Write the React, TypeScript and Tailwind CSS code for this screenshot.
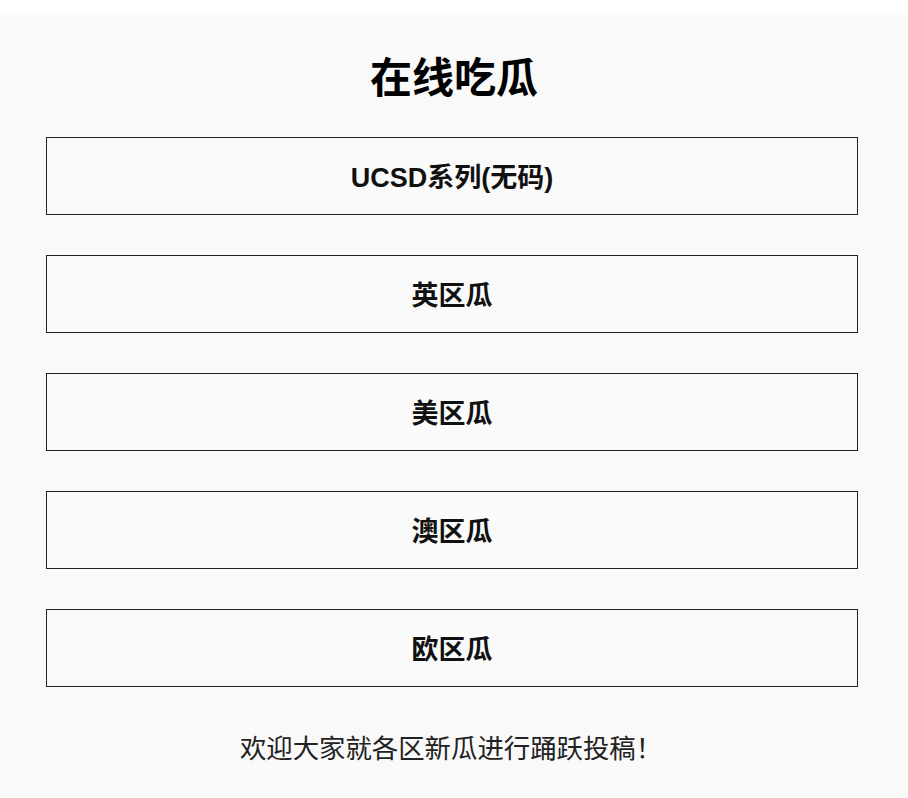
const regions = ['UCSD系列(无码)', '英区瓜', '美区瓜', '澳区瓜', '欧区瓜'];

export default function App() {
  return (
    <div
      className="min-h-screen bg-white pt-[15px]"
      style={{ fontFamily: '"Liberation Sans", "Noto Sans CJK SC", sans-serif' }}
    >
      <main className="min-h-[783px] bg-[#f9f9f9] pt-[39px]">
        <h1 className="text-center text-[42px] leading-[50px] font-bold text-black">在线吃瓜</h1>

        <div className="mt-[33px] ml-[46px] flex w-[812px] flex-col gap-[40px]">
          {regions.map((name) => (
            <a
              key={name}
              href="#"
              className="flex h-[78px] items-center justify-center border border-[#222] bg-[#fafafa] pt-[4px] text-[27px] font-bold text-[#111]"
            >
              {name}
            </a>
          ))}
        </div>

        <p className="mt-[44px] pr-[6px] text-center text-[26.4px] leading-[36px] text-[#222]">
          欢迎大家就各区新瓜进行踊跃投稿！
        </p>
      </main>
    </div>
  );
}
